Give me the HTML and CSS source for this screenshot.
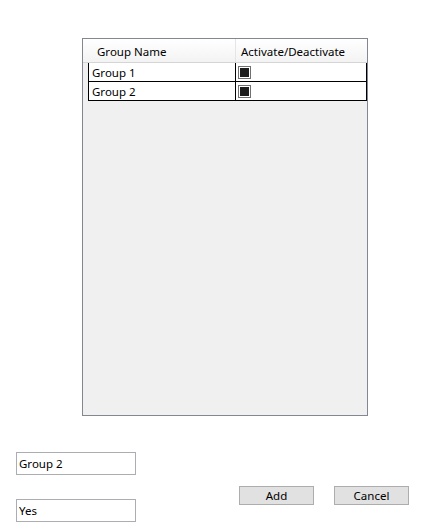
FILE: index.html
```html
<!DOCTYPE html>
<html lang="en">
<head>
<meta charset="UTF-8">
<title>Groups</title>
<link rel="stylesheet" href="styles.css">
</head>
<body>

<div class="grid">
  <div class="grid-head">
    <div class="col-name">Group Name</div>
    <div class="col-active">Activate/Deactivate</div>
  </div>
  <div class="grid-rows">
    <div class="row">
      <div class="cell-name">Group 1</div>
      <div class="cell-active"><span class="check"></span></div>
    </div>
    <div class="row">
      <div class="cell-name">Group 2</div>
      <div class="cell-active"><span class="check"></span></div>
    </div>
  </div>
</div>

<div class="bottom">
  <div class="fields">
    <input type="text" class="field" value="Group 2">
    <input type="text" class="field" value="Yes">
  </div>
  <div class="buttons">
    <button class="btn">Add</button>
    <button class="btn">Cancel</button>
  </div>
</div>

</body>
</html>
```

FILE: styles.css
```css
/* Page */
body {
  margin: 0;
  background: #ffffff;
  font-family: "Noto Sans", "Open Sans", sans-serif;
  font-size: 11.5px;
  color: #000;
}

/* Data grid */
.grid {
  box-sizing: border-box;
  width: 286px;
  height: 378px;
  margin: 38px 0 0 82px;
  border: 1px solid #828790;
  background: #f0f0f0;
}

.grid-head {
  display: flex;
  height: 23px;
  background: linear-gradient(to bottom, #ffffff, #f3f3f3);
  border-bottom: 1px solid #d5d5d5;
}

.grid-head div {
  line-height: 25px;
}

.col-name {
  width: 153px;
  padding-left: 14px;
  border-right: 1px solid #e5e5e5;
  box-sizing: border-box;
}

.col-active {
  padding-left: 5px;
}

.grid-rows {
  box-sizing: border-box;
  margin-left: 5px;
  width: 279px;
  border-left: 1px solid #000;
  border-right: 1px solid #000;
  background: #fff;
}

.row {
  display: flex;
  height: 18px;
  border-bottom: 1px solid #000;
}

.cell-name {
  width: 147px;
  padding-left: 3px;
  line-height: 20px;
  border-right: 1px solid #000;
  box-sizing: border-box;
}

.cell-active {
  display: flex;
  align-items: center;
  padding-left: 2px;
}

.check {
  width: 13px;
  height: 13px;
  box-sizing: border-box;
  border: 1px solid #707070;
  background: #fff;
  display: flex;
  align-items: center;
  justify-content: center;
}

.check::after {
  content: "";
  width: 9px;
  height: 9px;
  background: #1c1c1c;
}

/* Bottom form */
.bottom {
  display: flex;
  margin: 36px 0 0 16px;
}

.fields {
  display: flex;
  flex-direction: column;
  gap: 24px;
}

.field {
  box-sizing: border-box;
  width: 120px;
  height: 23px;
  margin: 0;
  padding: 0 2px;
  border: 1px solid #abadb3;
  font-family: inherit;
  font-size: 11.5px;
  color: #000;
  outline: none;
}

.buttons {
  display: flex;
  gap: 20px;
  margin: 34px 0 0 103px;
  align-self: flex-start;
}

.btn {
  box-sizing: border-box;
  width: 75px;
  height: 19px;
  margin: 0;
  padding: 0;
  background: #e1e1e1;
  border: 1px solid #adadad;
  font-family: inherit;
  font-size: 11.5px;
  color: #000;
  line-height: 16px;
}
```
